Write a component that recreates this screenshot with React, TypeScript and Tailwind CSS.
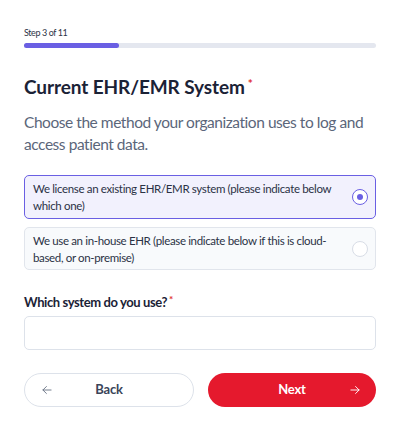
import { useState } from 'react'

const options = [
  { id: 'license', label: 'We license an existing EHR/EMR system (please indicate below which one)' },
  { id: 'inhouse', label: 'We use an in-house EHR (please indicate below if this is cloud-based, or on-premise)' },
]

export default function App() {
  const [selected, setSelected] = useState('license')

  return (
    <div className="min-h-screen bg-white px-6 pt-[27px] font-['Lato',sans-serif]">
      {/* Progress */}
      <p className="text-[9px] leading-[12px] tracking-[-0.4px] text-[#2c3346]">Step 3 of 11</p>
      <div className="mt-[4px] h-[5px] w-full rounded-full bg-[#e4e7ef]">
        <div className="h-full w-[27%] rounded-full bg-[#6a5fe3]" />
      </div>

      {/* Heading */}
      <h1 className="mt-[25px] flex items-start text-[19px] font-bold leading-[28px] tracking-[-0.1px] text-[#1b2236]">
        Current EHR/EMR System
        <span className="ml-[3px] text-[12px] leading-[22px] text-[#e0302f]">*</span>
      </h1>
      <p className="mt-[10px] text-[15.5px] leading-[22px] tracking-[-0.45px] text-[#5b667a]">
        Choose the method your organization uses to log and access patient data.
      </p>

      {/* Options */}
      <div className="mt-[20px] flex flex-col gap-[8px]">
        {options.map((o) => {
          const active = selected === o.id
          return (
            <button
              key={o.id}
              onClick={() => setSelected(o.id)}
              className={
                active
                  ? 'flex h-[44px] items-center justify-between rounded-[5px] border-[1.5px] border-[#6a5fe3] bg-[#f2f1fd] pl-[8px] pr-[7px] text-left'
                  : 'flex h-[43px] items-center justify-between rounded-[5px] border border-[#e1e5ec] bg-[#f8fafc] pl-[8px] pr-[7px] text-left'
              }
            >
              <span className="max-w-[318px] text-[11.5px] leading-[17px] tracking-[-0.35px] text-[#2b3245]">{o.label}</span>
              <span
                className={
                  active
                    ? 'flex h-[16px] w-[16px] shrink-0 items-center justify-center rounded-full border-[1.5px] border-[#6a5fe3] bg-white'
                    : 'flex h-[16px] w-[16px] shrink-0 items-center justify-center rounded-full border border-[#d8dde6] bg-white'
                }
              >
                {active && <span className="h-[6px] w-[6px] rounded-full bg-[#6a5fe3]" />}
              </span>
            </button>
          )
        })}
      </div>

      {/* System input */}
      <label className="mt-[22px] flex items-start text-[13px] font-bold leading-[20px] tracking-[-0.4px] text-[#1b2236]">
        Which system do you use?
        <span className="ml-[2px] text-[10px] leading-[14px] text-[#e0302f]">*</span>
      </label>
      <input className="mt-[4px] h-[34px] w-full rounded-[5px] border border-[#dde2ea] bg-white px-3 text-[13px] outline-none" />

      {/* Actions */}
      <div className="mt-[23px] flex gap-[14px]">
        <button className="relative flex h-[34px] flex-1 items-center justify-center rounded-full border border-[#dde2ea] bg-white text-[13px] font-bold tracking-[-0.2px] text-[#3a4459]">
          <svg className="absolute left-[15px] h-[14px] w-[14px] text-[#6b7487]" viewBox="0 0 24 24" fill="none" stroke="currentColor" strokeWidth={1.6} strokeLinecap="round" strokeLinejoin="round">
            <path d="M19 12H5M11 6l-6 6 6 6" />
          </svg>
          Back
        </button>
        <button className="relative flex h-[34px] flex-1 items-center justify-center rounded-full bg-[#e5192d] text-[13px] font-bold tracking-[-0.2px] text-white">
          Next
          <svg className="absolute right-[14px] h-[14px] w-[14px] text-white" viewBox="0 0 24 24" fill="none" stroke="currentColor" strokeWidth={1.6} strokeLinecap="round" strokeLinejoin="round">
            <path d="M5 12h14M13 6l6 6-6 6" />
          </svg>
        </button>
      </div>
    </div>
  )
}
